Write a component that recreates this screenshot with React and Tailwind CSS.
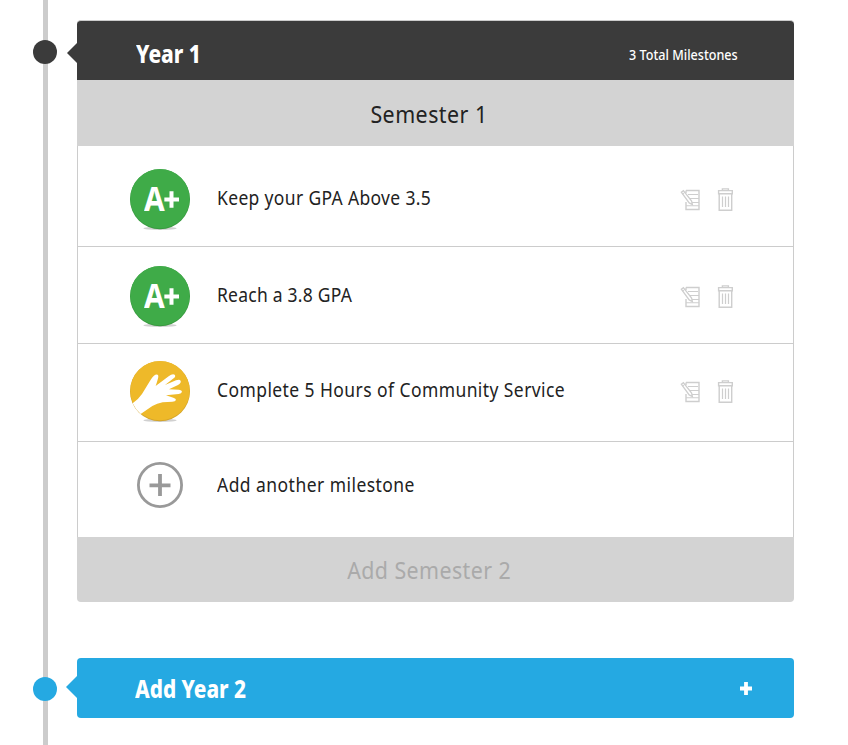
import React from "react";

function GradeBadge() {
  return (
    <div className="relative h-[60px] w-[60px] shrink-0">
      <svg viewBox="30 33 180 186" className="absolute left-0 top-0 h-[62px] w-[60px]">
        <ellipse cx="120" cy="211" rx="50" ry="5" fill="#d0d0d0" />
        <circle cx="120" cy="123.5" r="90" fill="#38993f" />
        <circle cx="120" cy="122" r="89" fill="#3fab48" />
        <path d="M154.5 100v49M133 124.5h44" stroke="#fff" strokeWidth="12" />
      </svg>
      <span className="absolute left-[14px] top-[6px] origin-left scale-x-[0.88] text-[34px] font-bold leading-[46px] text-white">
        A
      </span>
    </div>
  );
}

function HandBadge() {
  return (
    <svg viewBox="30 33 180 186" className="h-[62px] w-[60px] shrink-0 self-start">
      <ellipse cx="120" cy="211" rx="50" ry="5" fill="#d0d0d0" />
      <circle cx="120" cy="123.5" r="90" fill="#d3a429" />
      <circle cx="120" cy="122" r="89" fill="#eeb929" />
      <path
        d="M38 160Q56 147 66 132L88 96Q98 78 106 74Q116 71 115 80Q114 87 107 108L146 79Q157 70 164 74Q169 80 159 86L135 105L168 91Q180 86 182 93Q184 99 174 105L147 118L177 119Q186 120 186 125Q185 131 176 132L138 136L160 143Q168 146 168 150Q166 155 157 155L128 157Q111 160 97 168L62 192Q47 180 38 160Z"
        fill="#fff"
      />
    </svg>
  );
}

function EditIcon() {
  return (
    <svg viewBox="0 0 20 22" className="h-[22px] w-[20px]" fill="none" stroke="#cecece">
      <path d="M6 1.5h13v19H6V13M6 4V1.5" strokeWidth="1.4" />
      <path d="M8 5.5h10M10 9.5h9M12 13.5h7M6 16.8h13" strokeWidth="1.1" />
      <path d="M1.3 3.2 3.4 1.7 11.6 12l.8 3.6-3.2-1.7z" fill="#fff" strokeWidth="1.3" />
      <path d="m2.8 4.9 2-1.5" />
    </svg>
  );
}

function TrashIcon() {
  return (
    <svg viewBox="0 0 16 24" className="h-[24px] w-[16px]" fill="none" stroke="#cecece" strokeWidth="1.4">
      <path d="M5.4 2.2V.9h6v1.3M1.6 2.6h13.7v3.2H1.6zM2.2 5.8V22.3h12.5V5.8" />
      <path d="M5.5 8.5v10.5M8.5 8.5v10.5M11.5 8.5v10.5" strokeWidth="1.2" />
    </svg>
  );
}

function Actions() {
  return (
    <div className="ml-auto mr-[60px] mt-[19px] flex gap-[17px]">
      <div className="pt-px">
        <EditIcon />
      </div>
      <TrashIcon />
    </div>
  );
}

function Label({ className, children }) {
  return (
    <span className={"ml-[27px] origin-left scale-x-[0.92] whitespace-nowrap text-[19px] leading-[26px] text-[#222] " + className}>
      {children}
    </span>
  );
}

export default function App() {
  return (
    <div className="flex h-[745px] w-[848px] overflow-hidden bg-white font-['Noto_Sans',sans-serif]">
      <div className="relative ml-[43px] h-full w-[5px] shrink-0 bg-[#ccc]">
        <div className="absolute left-[-10px] top-[40px] h-6 w-6 rounded-full bg-[#3b3b3b]" />
        <div className="absolute left-[-10px] top-[677px] h-6 w-6 rounded-full bg-[#25a9e2]" />
      </div>

      <main className="ml-[29px] w-[717px] pt-[20px]">
        <section>
          <header className="relative flex h-[60px] items-center rounded-t-[4px] border-t border-[#ccc] bg-[#3b3b3b] text-white">
            <svg viewBox="0 0 10 20" className="absolute left-[-10px] top-[22px] h-5 w-[10px]">
              <path d="M10 0v20L0 10z" fill="#3b3b3b" />
            </svg>
            <h2 className="ml-[59px] mt-[6px] origin-left scale-x-[0.87] text-[24px] font-extrabold leading-[32px]">Year 1</h2>
            <span className="ml-auto mr-[56px] mt-[9px] origin-right scale-x-[0.9] text-[14px] font-medium leading-[18px]">
              3 Total Milestones
            </span>
          </header>

          <div className="flex h-[66px] items-center justify-center bg-[#d3d3d3] pr-[13px] pt-[2px]">
            <h3 className="scale-x-[0.93] text-[23px] leading-[30px] tracking-[0.5px] text-[#222]">Semester 1</h3>
          </div>

          <div className="border-x border-[#ccc]">
            <div className="flex h-[101px] items-start border-b border-[#ccc] pl-[52px] pt-[23px]">
              <GradeBadge />
              <Label className="mt-[16px] tracking-[0.38px]">Keep your GPA Above 3.5</Label>
              <Actions />
            </div>
            <div className="flex h-[97px] items-start border-b border-[#ccc] pl-[52px] pt-[19px]">
              <GradeBadge />
              <Label className="mt-[16px] tracking-[0.27px]">Reach a 3.8 GPA</Label>
              <Actions />
            </div>
            <div className="flex h-[98px] items-start border-b border-[#ccc] pl-[52px] pt-[17px]">
              <HandBadge />
              <Label className="mt-[16px] tracking-[0.46px]">Complete 5 Hours of Community Service</Label>
              <Actions />
            </div>
            <div className="flex h-[95px] items-start pl-[59px] pt-[20px]">
              <svg viewBox="0 0 46 46" className="mr-[7px] h-[46px] w-[46px]" fill="none" stroke="#999">
                <circle cx="23" cy="23" r="21.6" strokeWidth="2.8" />
                <path d="M23 12v22M12.5 23.3h21" strokeWidth="3.8" />
              </svg>
              <Label className="mt-[10px] tracking-[0.5px]">Add another milestone</Label>
            </div>
          </div>

          <div className="flex h-[65px] items-center justify-center rounded-b-[4px] bg-[#d3d3d3] pr-[13px] pt-px">
            <h3 className="scale-x-[0.93] text-[23px] leading-[30px] tracking-[0.45px] text-[#aaa]">Add Semester 2</h3>
          </div>
        </section>

        <section className="relative mt-[56px] flex h-[60px] items-center rounded-[4px] bg-[#25a9e2] text-white">
          <svg viewBox="0 0 11 22" className="absolute left-[-11px] top-[18px] h-[22px] w-[11px]">
            <path d="M11 0v22L0 11z" fill="#25a9e2" />
          </svg>
          <h2 className="ml-[58px] mt-[2px] origin-left scale-x-[0.865] text-[24px] font-extrabold leading-[32px]">Add Year 2</h2>
          <svg viewBox="0 0 12 13" className="ml-auto mr-[42px] mt-px h-[13px] w-[12px]">
            <path d="M6 0v13M0 6.5h12" stroke="#fff" strokeWidth="3.8" />
          </svg>
        </section>
      </main>
    </div>
  );
}
